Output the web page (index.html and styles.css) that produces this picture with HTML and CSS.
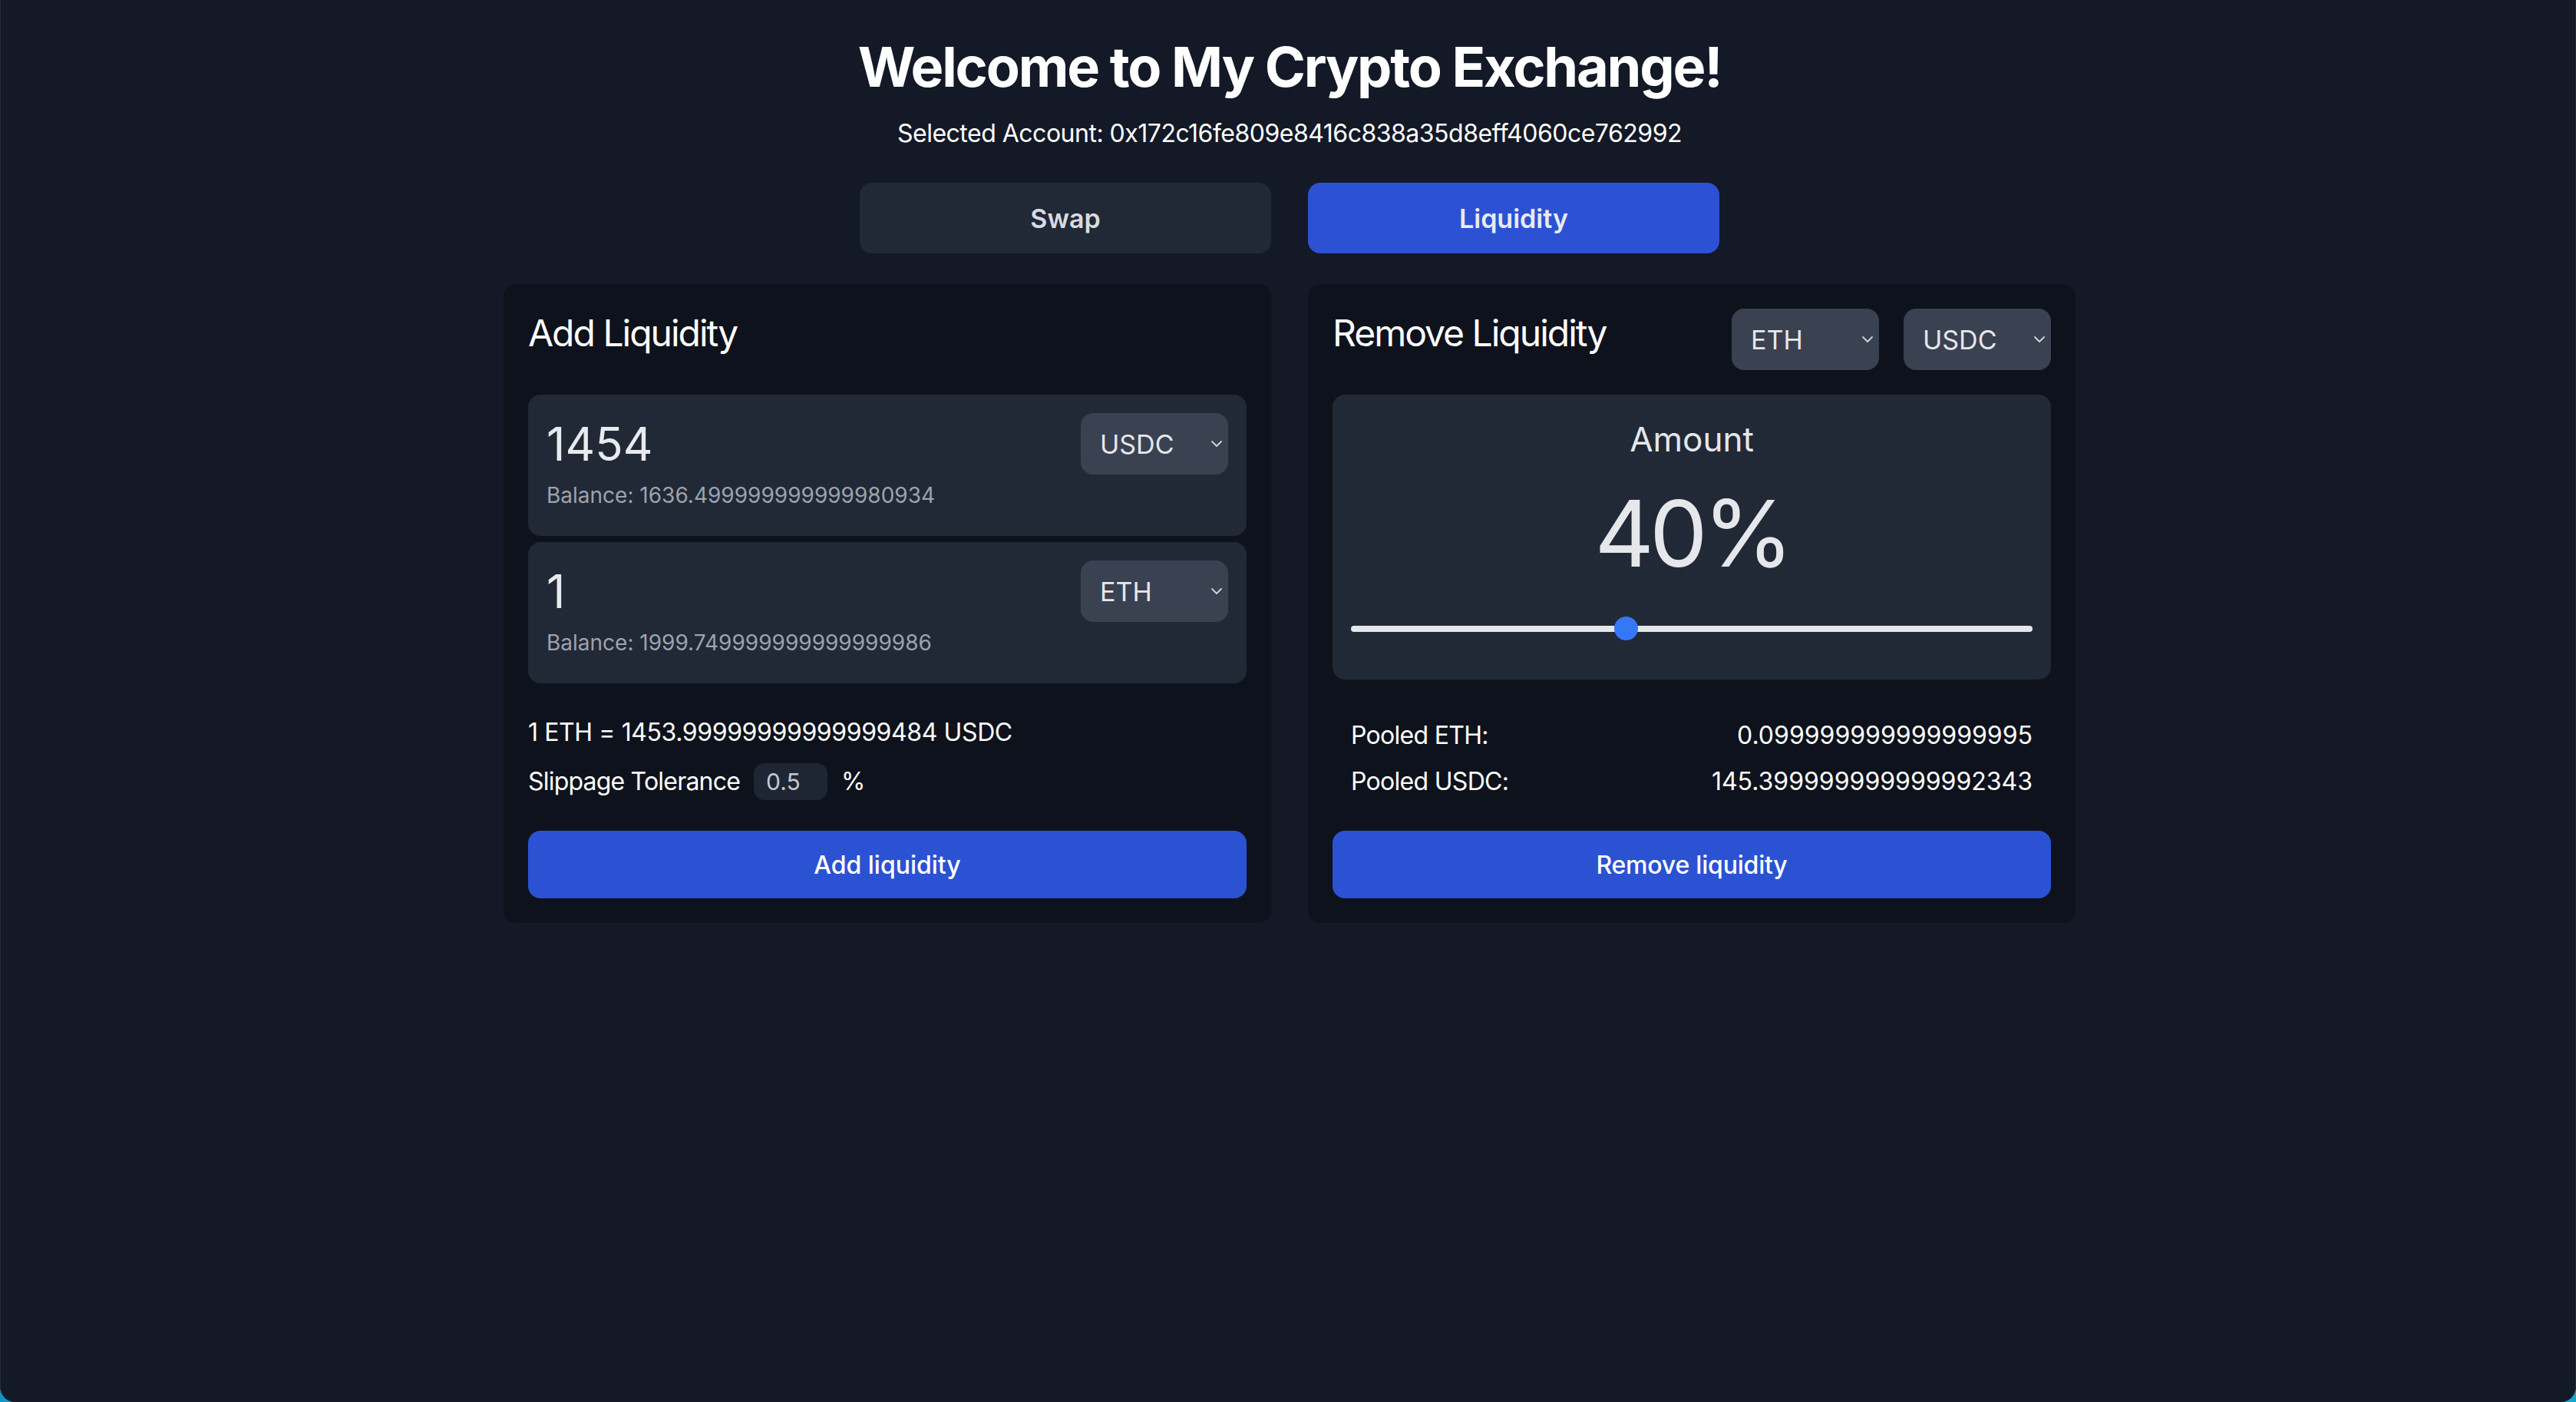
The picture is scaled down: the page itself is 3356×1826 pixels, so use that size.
FILE: index.html
```html
<!DOCTYPE html>
<html lang="en">
<head>
<meta charset="utf-8">
<title>My Crypto Exchange</title>
<link rel="stylesheet" href="styles.css">
</head>
<body>
<div class="window">
  <main class="app">
    <h1 class="title">Welcome to My Crypto Exchange!</h1>
    <p class="account">Selected Account: 0x172c16fe809e8416c838a35d8eff4060ce762992</p>
    <div class="tabs">
      <button class="tab">Swap</button>
      <button class="tab tab-active">Liquidity</button>
    </div>
    <div class="cards">
      <section class="card">
        <div class="card-header">
          <h2 class="card-title">Add Liquidity</h2>
        </div>
        <div class="token-box">
          <div class="token-row">
            <span class="token-value">1454</span>
            <div class="select">
              <span class="select-label">USDC</span>
              <svg class="chevron" viewBox="0 0 16 10" width="16" height="10"><path d="M2 2 L8 8 L14 2" fill="none" stroke="#d1d5db" stroke-width="1.8" stroke-linecap="round" stroke-linejoin="round"/></svg>
            </div>
          </div>
          <div class="balance">Balance: 1636.499999999999980934</div>
        </div>
        <div class="token-box">
          <div class="token-row">
            <span class="token-value">1</span>
            <div class="select">
              <span class="select-label">ETH</span>
              <svg class="chevron" viewBox="0 0 16 10" width="16" height="10"><path d="M2 2 L8 8 L14 2" fill="none" stroke="#d1d5db" stroke-width="1.8" stroke-linecap="round" stroke-linejoin="round"/></svg>
            </div>
          </div>
          <div class="balance">Balance: 1999.749999999999999986</div>
        </div>
        <div class="rate">1 ETH = 1453.99999999999999484 USDC</div>
        <div class="slippage">
          <span>Slippage Tolerance</span>
          <span class="slip-input">0.5</span>
          <span>%</span>
        </div>
        <button class="action">Add liquidity</button>
      </section>
      <section class="card">
        <div class="card-header">
          <h2 class="card-title">Remove Liquidity</h2>
          <div class="select-group">
            <div class="select">
              <span class="select-label">ETH</span>
              <svg class="chevron" viewBox="0 0 16 10" width="16" height="10"><path d="M2 2 L8 8 L14 2" fill="none" stroke="#d1d5db" stroke-width="1.8" stroke-linecap="round" stroke-linejoin="round"/></svg>
            </div>
            <div class="select">
              <span class="select-label">USDC</span>
              <svg class="chevron" viewBox="0 0 16 10" width="16" height="10"><path d="M2 2 L8 8 L14 2" fill="none" stroke="#d1d5db" stroke-width="1.8" stroke-linecap="round" stroke-linejoin="round"/></svg>
            </div>
          </div>
        </div>
        <div class="amount-panel">
          <div class="amount-label">Amount</div>
          <div class="amount-value">40%</div>
          <input class="range" type="range" min="0" max="100" value="40">
        </div>
        <div class="pooled">
          <div class="pooled-row"><span>Pooled ETH:</span><span>0.099999999999999995</span></div>
          <div class="pooled-row"><span>Pooled USDC:</span><span>145.399999999999992343</span></div>
        </div>
        <button class="action action-remove">Remove liquidity</button>
      </section>
    </div>
  </main>
</div>
</body>
</html>
```

FILE: styles.css
```css
* { box-sizing: border-box; }

html, body {
  margin: 0;
  padding: 0;
  height: 100%;
}

body {
  background: linear-gradient(90deg, #1597c6, #14a7c9);
  font-family: Inter, "Noto Sans", "Liberation Sans", sans-serif;
  color: #ffffff;
}

.window {
  min-height: 100vh;
  background: #131927;
  border-radius: 0 0 20px 20px;
  box-shadow: inset 1px 0 0 #262c39, inset -1px 0 0 #262c39;
}

.app {
  padding: 47px 0 0 4px;
  display: flex;
  flex-direction: column;
  align-items: center;
}

.title {
  margin: 0;
  font-size: 72px;
  line-height: 80px;
  font-weight: 700;
  letter-spacing: -2.2px;
  color: #ffffff;
}

.account {
  margin: 23px 0 0;
  font-size: 32px;
  line-height: 48px;
  letter-spacing: -0.5px;
  color: #ffffff;
}

.tabs {
  margin-top: 40px;
  display: flex;
  gap: 48px;
  width: 1120px;
}

.tab {
  flex: 1;
  height: 92px;
  border: none;
  border-radius: 16px;
  background: #212836;
  color: #d7dbe1;
  font-family: inherit;
  font-size: 34px;
  font-weight: 600;
}

.tab-active {
  background: #2c52d3;
  color: #e8ebf3;
}

.cards {
  margin-top: 40px;
  width: 2048px;
  display: grid;
  grid-template-columns: 1fr 1fr;
  gap: 48px;
}

.card {
  background: #0e121c;
  border-radius: 16px;
  padding: 32px;
  display: flex;
  flex-direction: column;
}

.card-header {
  height: 80px;
  margin-bottom: 32px;
  display: flex;
  justify-content: space-between;
  align-items: flex-start;
}

.card-title {
  margin: 0;
  font-size: 48px;
  line-height: 64px;
  font-weight: 400;
  letter-spacing: -2px;
  color: #ffffff;
}

.select-group {
  display: flex;
  gap: 32px;
}

.select {
  width: 192px;
  height: 80px;
  border-radius: 16px;
  background: #3a4151;
  display: flex;
  align-items: center;
  justify-content: space-between;
  padding: 0 7px 0 25px;
}

.select-label {
  font-size: 34px;
  color: #e5e7eb;
}

.chevron {
  display: block;
}

.token-box {
  background: #212836;
  border-radius: 16px;
  padding: 24px 24px 33px;
  margin-bottom: 8px;
}

.token-box + .token-box {
  margin-bottom: 0;
}

.token-row {
  height: 80px;
  display: flex;
  align-items: center;
  justify-content: space-between;
}

.token-value {
  font-size: 60px;
  line-height: 80px;
  color: #e8eaee;
}

.balance {
  margin-top: 7px;
  font-size: 28px;
  line-height: 40px;
  color: #9ca3af;
}

.rate {
  margin-top: 40px;
  font-size: 32px;
  line-height: 48px;
  letter-spacing: -0.4px;
  color: #ffffff;
}

.slippage {
  margin-top: 16px;
  height: 48px;
  display: flex;
  align-items: center;
  gap: 18px;
  font-size: 32px;
  line-height: 48px;
  letter-spacing: -0.8px;
  color: #ffffff;
}

.slip-input {
  width: 96px;
  height: 48px;
  border-radius: 14px;
  background: #1f2633;
  padding-left: 16px;
  font-size: 30px;
  line-height: 48px;
  letter-spacing: 0;
  color: #c3c8d0;
}

.action {
  margin-top: 40px;
  height: 88px;
  width: 100%;
  border: none;
  border-radius: 16px;
  background: #2b52d3;
  color: #ffffff;
  font-family: inherit;
  font-size: 32px;
  font-weight: 500;
}

.action-remove {
  letter-spacing: -0.2px;
}

.amount-panel {
  height: 371px;
  background: #212836;
  border-radius: 16px;
  padding: 30px 24px 0;
}

.amount-label {
  text-align: center;
  font-size: 44px;
  line-height: 56px;
  color: #e5e7eb;
}

.amount-value {
  margin-top: 35px;
  text-align: center;
  font-size: 120px;
  line-height: 120px;
  letter-spacing: -6px;
  color: #e5e7eb;
}

.range {
  -webkit-appearance: none;
  appearance: none;
  display: block;
  width: 100%;
  height: 31px;
  margin: 48px 0 0;
  padding: 0;
  background: transparent;
}

.range::-webkit-slider-runnable-track {
  height: 8px;
  border-radius: 4px;
  background: #e5e7eb;
}

.range::-webkit-slider-thumb {
  -webkit-appearance: none;
  appearance: none;
  width: 31px;
  height: 31px;
  margin-top: -11.5px;
  border: none;
  border-radius: 50%;
  background: #3478f6;
}

.pooled {
  margin-top: 49px;
  padding: 0 24px;
  display: flex;
  flex-direction: column;
  gap: 12px;
}

.pooled-row {
  display: flex;
  justify-content: space-between;
  font-size: 32px;
  line-height: 48px;
  color: #ffffff;
}

.pooled-row span:first-child {
  letter-spacing: -0.7px;
}
```
